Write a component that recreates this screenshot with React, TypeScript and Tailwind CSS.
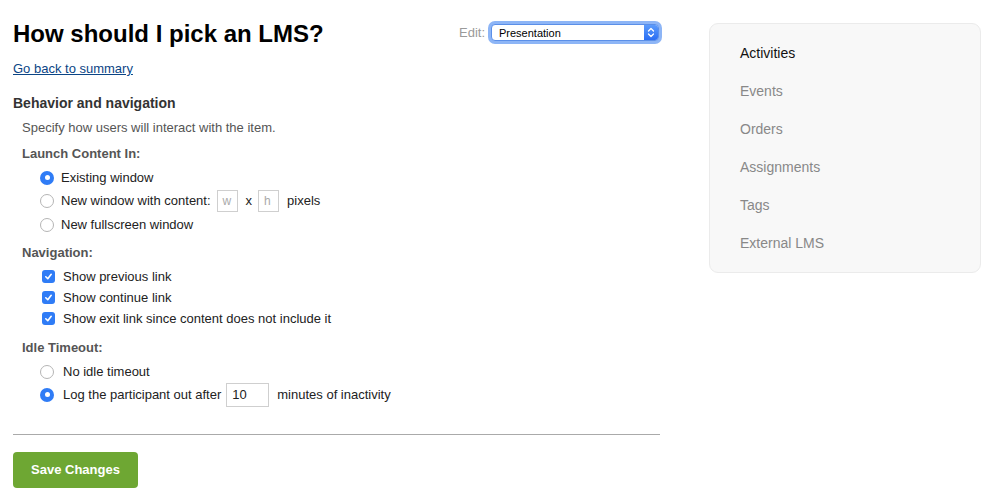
import React from 'react'

const font = { fontFamily: '"Liberation Sans", Arial, sans-serif' }

const Radio = ({ checked }: { checked?: boolean }) =>
	checked ? (
		<span className="w-[14px] h-[14px] rounded-full bg-[#2f7cf6] flex items-center justify-center shrink-0">
			<span className="w-[5px] h-[5px] rounded-full bg-white" />
		</span>
	) : (
		<span className="w-[14px] h-[14px] rounded-full bg-white border border-[#b5b5b5] shrink-0" />
	)

const Checkbox = () => (
	<span className="w-[13px] h-[13px] rounded-[3px] bg-[#2f7cf6] flex items-center justify-center shrink-0">
		<svg width="9" height="9" viewBox="0 0 10 10">
			<path d="M2 5.3 L4.2 7.4 L8 2.6" fill="none" stroke="white" strokeWidth="1.8" strokeLinecap="round" strokeLinejoin="round" />
		</svg>
	</span>
)

const SmallInput = ({ placeholder, className }: { placeholder: string; className: string }) => (
	<span className={`${className} w-[21px] h-[22px] border border-[#cfcfcf] bg-white flex items-center px-[5px] text-[12px] text-[#aaa]`}>
		{placeholder}
	</span>
)

const sideItems = ['Activities', 'Events', 'Orders', 'Assignments', 'Tags', 'External LMS']

export default function App() {
	return (
		<div className="w-[996px] h-[502px] bg-white flex pl-[13px] pr-[15px]" style={font}>
			<div className="w-[647px] flex flex-col">
				<div className="flex justify-between items-start mt-[20px]">
					<h1 className="text-[24px] leading-[28px] font-bold text-black">How should I pick an LMS?</h1>
					<div className="flex items-center mt-[3px] mr-[1px]">
						<span className="text-[13px] text-[#9a9a9a] mr-[6px]">Edit:</span>
						<div className="w-[168px] h-[17px] rounded-[4px] bg-white flex items-center ring-[3px] ring-[#8db5f6] border border-[#5b8fe8] overflow-hidden">
							<span className="flex-1 text-[11px] text-black pl-[7px]">Presentation</span>
							<span className="w-[14px] h-full bg-gradient-to-b from-[#5c9bfb] to-[#2a6df3] flex items-center justify-center">
								<svg width="8" height="11" viewBox="0 0 8 11">
									<path d="M1.5 4 L4 1.5 L6.5 4 M1.5 7 L4 9.5 L6.5 7" fill="none" stroke="white" strokeWidth="1.3" strokeLinecap="round" strokeLinejoin="round" />
								</svg>
							</span>
						</div>
					</div>
				</div>
				<a href="#" className="mt-[13px] text-[13px] leading-[16px] text-[#0b4585] underline self-start">
					Go back to summary
				</a>
				<h2 className="mt-[18px] text-[14px] leading-[17px] font-bold text-[#333]">Behavior and navigation</h2>
				<p className="mt-[8px] ml-[9px] text-[13px] leading-[16px] text-[#555]">Specify how users will interact with the item.</p>

				<div className="ml-[9px] mt-[10px] text-[13px] text-[#222]">
					<div className="font-bold text-[#555] leading-[16px]">Launch Content In:</div>
					<div className="ml-[18px] mt-[4px] flex flex-col">
						<label className="h-[23px] flex items-center gap-[7px]">
							<Radio checked />
							<span>Existing window</span>
						</label>
						<label className="h-[24px] flex items-center">
							<Radio />
							<span className="ml-[7px]">New window with content:</span>
							<SmallInput placeholder="w" className="ml-[6px]" />
							<span className="ml-[8px]">x</span>
							<SmallInput placeholder="h" className="ml-[6px]" />
							<span className="ml-[8px]">pixels</span>
						</label>
						<label className="h-[24px] flex items-center gap-[7px]">
							<Radio />
							<span>New fullscreen window</span>
						</label>
					</div>

					<div className="font-bold text-[#555] leading-[16px] mt-[8px]">Navigation:</div>
					<div className="ml-[20px] mt-[5px] flex flex-col">
						{['Show previous link', 'Show continue link', 'Show exit link since content does not include it'].map((t) => (
							<label key={t} className="h-[21px] flex items-center gap-[8px]">
								<Checkbox />
								<span>{t}</span>
							</label>
						))}
					</div>

					<div className="font-bold text-[#555] leading-[16px] mt-[11px]">Idle Timeout:</div>
					<div className="ml-[18px] mt-[4px] flex flex-col">
						<label className="h-[23px] flex items-center gap-[9px]">
							<Radio />
							<span>No idle timeout</span>
						</label>
						<label className="h-[23px] flex items-center">
							<Radio checked />
							<span className="ml-[9px]">Log the participant out after</span>
							<span className="ml-[5px] w-[43px] h-[24px] border border-[#cfcfcf] bg-white flex items-center px-[5px] text-[13px]">10</span>
							<span className="ml-[8px]">minutes of inactivity</span>
						</label>
					</div>
				</div>

				<div className="mt-[28px] border-t border-[#aaa]" />
				<button className="mt-[17px] self-start w-[125px] h-[36px] rounded-[4px] bg-[#6ea733] text-white text-[13px] font-bold">
					Save Changes
				</button>
			</div>

			<div className="ml-[49px] mt-[23px] w-[272px] h-[250px] rounded-[9px] bg-[#f8f8f8] border border-[#ebebeb] pt-[10px] pl-[30px]">
				{sideItems.map((s, i) => (
					<div key={s} className={`h-[38px] flex items-center text-[14px] ${i === 0 ? 'text-[#111]' : 'text-[#888]'}`}>
						{s}
					</div>
				))}
			</div>
		</div>
	)
}
